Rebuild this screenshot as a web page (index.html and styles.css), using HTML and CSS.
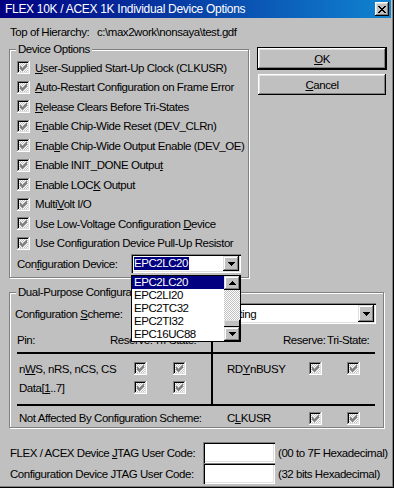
FILE: index.html
```html
<!DOCTYPE html>
<html lang="en">
<head>
    <meta charset="UTF-8">
    <title>FLEX 10K / ACEX 1K Individual Device Options</title>
    <link rel="stylesheet" href="styles.css">
</head>
<body>
    <!-- Shared bitmaps: checked (disabled) checkbox, arrows -->
    <svg class="defs" width="0" height="0" aria-hidden="true">
        <defs>
            <pattern id="dither" width="2" height="2" patternUnits="userSpaceOnUse">
                <rect width="2" height="2" fill="#c0c0c0"/>
                <rect width="1" height="1" fill="#fff"/>
                <rect x="1" y="1" width="1" height="1" fill="#fff"/>
            </pattern>
            <symbol id="chk" viewBox="0 0 13 13" shape-rendering="crispEdges">
                <rect width="12" height="1" fill="#808080"/>
                <rect width="1" height="12" fill="#808080"/>
                <rect x="1" y="1" width="10" height="1" fill="#000"/>
                <rect x="1" y="1" width="1" height="10" fill="#000"/>
                <rect y="12" width="13" height="1" fill="#fff"/>
                <rect x="12" width="1" height="13" fill="#fff"/>
                <rect x="1" y="11" width="11" height="1" fill="#dfdfdf"/>
                <rect x="11" y="1" width="1" height="11" fill="#dfdfdf"/>
                <rect x="2" y="2" width="9" height="9" fill="url(#dither)"/>
                <path fill="#808080" d="M9 3h1v1h-1z M8 4h2v1h-2z M3 5h1v1h-1z M7 5h3v1h-3z M3 6h2v1h-2z M6 6h3v1h-3z M3 7h5v1h-5z M4 8h3v1h-3z M5 9h1v1h-1z"/>
            </symbol>
            <symbol id="arrow-down" viewBox="0 0 7 4" shape-rendering="crispEdges">
                <path fill="#000" d="M0 0h7v1H0z M1 1h5v1H1z M2 2h3v1H2z M3 3h1v1H3z"/>
            </symbol>
            <symbol id="arrow-up" viewBox="0 0 7 4" shape-rendering="crispEdges">
                <path fill="#000" d="M3 0h1v1H3z M2 1h3v1H2z M1 2h5v1H1z M0 3h7v1H0z"/>
            </symbol>
        </defs>
    </svg>

    <div class="dialog">
        <div class="titlebar">
            <span class="title">FLEX 10K / ACEX 1K Individual Device Options</span>
            <span class="close-btn">
                <svg width="8" height="7" viewBox="0 0 8 7" shape-rendering="crispEdges"><path fill="#000" d="M0 0h2v1H0z M6 0h2v1H6z M1 1h2v1H1z M5 1h2v1H5z M2 2h4v1H2z M3 3h2v1H3z M2 4h4v1H2z M1 5h2v1H1z M5 5h2v1H5z M0 6h2v1H0z M6 6h2v1H6z"/></svg>
            </span>
        </div>

        <div class="content">
            <div class="hier">
                <span class="hier-label">Top of Hierarchy:</span>
                <span>c:\max2work\nonsaya\test.gdf</span>
            </div>

            <div class="main">
                <!-- Device Options -->
                <div class="group dev-group">
                    <span class="legend">Device Options</span>
                    <div class="cb-row"><svg class="cb"><use href="#chk"/></svg><span><u>U</u>ser-Supplied Start-Up Clock (CLKUSR)</span></div>
                    <div class="cb-row"><svg class="cb"><use href="#chk"/></svg><span><u>A</u>uto-Restart Configuration on Frame Error</span></div>
                    <div class="cb-row"><svg class="cb"><use href="#chk"/></svg><span><u>R</u>elease Clears Before Tri-States</span></div>
                    <div class="cb-row"><svg class="cb"><use href="#chk"/></svg><span>E<u>n</u>able Chip-Wide Reset (DEV_CLRn)</span></div>
                    <div class="cb-row"><svg class="cb"><use href="#chk"/></svg><span>Ena<u>b</u>le Chip-Wide Output Enable (DEV_OE)</span></div>
                    <div class="cb-row"><svg class="cb"><use href="#chk"/></svg><span>Enable INIT_DONE Outpu<u>t</u></span></div>
                    <div class="cb-row"><svg class="cb"><use href="#chk"/></svg><span>Enable LOC<u>K</u> Output</span></div>
                    <div class="cb-row"><svg class="cb"><use href="#chk"/></svg><span>Multi<u>V</u>olt I/O</span></div>
                    <div class="cb-row"><svg class="cb"><use href="#chk"/></svg><span>Use Low-Voltage Configuration <u>D</u>evice</span></div>
                    <div class="cb-row"><svg class="cb"><use href="#chk"/></svg><span>Use Configuration Device Pull-Up Resistor</span></div>

                    <div class="cfg-row">
                        <span class="cfg-label">Con<u>f</u>iguration Device:</span>
                        <div class="combo-wrap">
                            <div class="combo combo-small">
                                <span class="combo-value"><span class="sel">EPC2LC20</span></span>
                                <span class="drop"><svg width="7" height="4"><use href="#arrow-down"/></svg></span>
                            </div>
                            <!-- open drop-down list -->
                            <div class="droplist">
                                <div class="items">
                                    <div class="item active">EPC2LC20</div>
                                    <div class="item">EPC2LI20</div>
                                    <div class="item">EPC2TC32</div>
                                    <div class="item">EPC2TI32</div>
                                    <div class="item">EPC16UC88</div>
                                </div>
                                <div class="scroll">
                                    <span class="sbtn"><svg width="7" height="4"><use href="#arrow-up"/></svg></span>
                                    <span class="track"></span>
                                    <span class="thumb"></span>
                                    <span class="sbtn"><svg width="7" height="4"><use href="#arrow-down"/></svg></span>
                                </div>
                            </div>
                        </div>
                    </div>
                </div>

                <div class="buttons">
                    <div class="btn btn-default"><u>O</u>K</div>
                    <div class="btn btn-cancel"><u>C</u>ancel</div>
                </div>
            </div>

            <!-- Dual-Purpose Configuration Pins -->
            <div class="group dual-group">
                <span class="legend">Dual-Purpose Configuration Pins</span>
                <div class="scheme-row">
                    <span class="scheme-label">Configuration <u>S</u>cheme:</span>
                    <div class="combo combo-wide">
                        <span class="combo-value">Passive Serial Bit-Blasting</span>
                        <span class="drop"><svg width="7" height="4"><use href="#arrow-down"/></svg></span>
                    </div>
                </div>

                <div class="pins">
                    <div class="pane pane-left">
                        <div class="pin-head">
                            <span class="ph-pin">Pin:</span>
                            <span class="ph-res">Reserve:</span>
                            <span>Tri-State:</span>
                        </div>
                        <div class="rule"></div>
                        <div class="pin-rows">
                            <div class="pin-row"><span>n<u>W</u>S, nRS, nCS, CS</span><svg class="cb"><use href="#chk"/></svg><svg class="cb"><use href="#chk"/></svg></div>
                            <div class="pin-row"><span>Data[<u>1</u>..7]</span><svg class="cb"><use href="#chk"/></svg><svg class="cb"><use href="#chk"/></svg></div>
                        </div>
                        <div class="rule rule-bottom"></div>
                    </div>
                    <div class="vrule"></div>
                    <div class="pane pane-right">
                        <div class="pin-head">
                            <span class="ph-res">Reserve:</span>
                            <span>Tri-State:</span>
                        </div>
                        <div class="rule"></div>
                        <div class="pin-rows">
                            <div class="pin-row"><span>RD<u>Y</u>nBUSY</span><svg class="cb"><use href="#chk"/></svg><svg class="cb"><use href="#chk"/></svg></div>
                        </div>
                        <div class="rule rule-bottom"></div>
                    </div>
                </div>

                <div class="free-row">
                    <span>Not Affected By Configuration Scheme:</span>
                    <span>C<u>L</u>KUSR</span>
                    <svg class="cb"><use href="#chk"/></svg>
                    <svg class="cb"><use href="#chk"/></svg>
                </div>
            </div>

            <!-- JTAG user codes -->
            <div class="jtag">
                <span>FLEX / ACEX Device <u>J</u>TAG User Code:</span>
                <span class="field"></span>
                <span class="hint">(00 to 7F Hexadecimal)</span>
                <span>Configuration Device JTAG User Code:</span>
                <span class="field"></span>
                <span class="hint">(32 bits Hexadecimal)</span>
            </div>
        </div>
    </div>
</body>
</html>
```

FILE: styles.css
```css
/* Windows classic dialog */
body {
    margin: 0;
    background: #c0c0c0;
    font-family: "Liberation Sans", Arial, sans-serif;
    font-size: 11.5px;
    letter-spacing: -0.45px;
    line-height: 14px;
    color: #000;
    white-space: nowrap;
}
u {
    text-decoration: underline;
    text-underline-offset: 1px;
}
.defs {
    position: absolute;
    width: 0;
    height: 0;
}
.dialog {
    width: 394px;
    height: 488px;
    box-sizing: border-box;
    background: #c0c0c0;
    box-shadow: inset -1px -1px #000, inset -2px -2px #808080;
}
.titlebar {
    width: 391px;
    height: 18px;
    box-sizing: border-box;
    padding: 0 2px 0 5px;
    display: flex;
    align-items: center;
    justify-content: space-between;
    background: linear-gradient(to right, #000080, #1084d0);
    color: #fff;
    font-size: 12px;
    letter-spacing: -0.3px;
}
.close-btn {
    width: 14px;
    height: 14px;
    box-sizing: border-box;
    background: #c0c0c0;
    box-shadow: inset -1px -1px #000, inset 1px 1px #fff, inset -2px -2px #808080, inset 2px 2px #dfdfdf;
    display: flex;
    align-items: center;
    justify-content: center;
}
.close-btn svg {
    display: block;
}
.content {
    padding-left: 9px;
}
.hier {
    margin-top: 7px;
    height: 14px;
    padding-left: 1px;
    display: flex;
}
.hier-label {
    width: 87px;
}
.main {
    display: flex;
    gap: 8px;
    margin-top: 8px;
}

/* etched group boxes */
.group {
    position: relative;
    box-sizing: border-box;
    border: 1px solid #808080;
    box-shadow: 1px 1px 0 #fff, inset 1px 1px 0 #fff;
}
.legend {
    position: absolute;
    top: -8px;
    left: 6px;
    padding: 0 2px;
    background: #c0c0c0;
}
.dev-group {
    width: 240px;
    height: 229px;
    margin-top: 2px;
    padding: 8px 0 0 7px;
}
.cb-row {
    height: 19.5px;
    display: flex;
    align-items: center;
    gap: 5px;
}
.cb {
    width: 13px;
    height: 13px;
    display: block;
    flex: none;
}
.cfg-row {
    margin-top: 1px;
    height: 19px;
    display: flex;
    align-items: center;
}
.cfg-label {
    width: 114px;
}

/* combo boxes */
.combo-wrap {
    position: relative;
}
.combo {
    box-sizing: border-box;
    display: flex;
    padding: 2px;
    background: #fff;
    box-shadow: inset 1px 1px #808080, inset 2px 2px #000, inset -1px -1px #fff, inset -2px -2px #dfdfdf;
}
.combo-small {
    width: 110px;
    height: 19px;
}
.combo-wide {
    width: 245px;
    height: 21px;
}
.combo-value {
    flex: 1;
    padding-left: 1px;
    display: flex;
    align-items: center;
    overflow: hidden;
}
.sel {
    background: #000080;
    color: #fff;
    line-height: 13px;
    padding-right: 1px;
}
.drop, .sbtn {
    width: 16px;
    flex: none;
    background: #c0c0c0;
    box-shadow: inset -1px -1px #000, inset 1px 1px #dfdfdf, inset -2px -2px #808080, inset 2px 2px #fff;
    display: flex;
    align-items: center;
    justify-content: center;
}
.drop svg, .sbtn svg {
    display: block;
}
.droplist {
    position: absolute;
    left: 0;
    top: 21px;
    z-index: 5;
    width: 110px;
    height: 67px;
    box-sizing: border-box;
    border: 1px solid #000;
    background: #fff;
    display: flex;
}
.items {
    flex: 1;
}
.item {
    height: 13px;
    line-height: 13px;
    padding-left: 2px;
}
.item.active {
    background: #000080;
    color: #fff;
}
.scroll {
    width: 16px;
    display: flex;
    flex-direction: column;
}
.sbtn {
    height: 14px;
}
.track {
    flex: 1;
    background: repeating-conic-gradient(#fff 0 25%, #c0c0c0 0 50%) 0 0 / 2px 2px;
}
.thumb {
    height: 7px;
    background: #c0c0c0;
    box-shadow: inset -1px -1px #000, inset 1px 1px #dfdfdf;
}

/* buttons */
.buttons {
    width: 130px;
    display: flex;
    flex-direction: column;
}
.btn {
    box-sizing: border-box;
    display: flex;
    align-items: center;
    justify-content: center;
    background: #c0c0c0;
}
.btn-default {
    height: 23px;
    box-shadow: inset 0 0 0 1px #000, inset -2px -2px #000, inset 2px 2px #fff, inset -3px -3px #808080, inset 3px 3px #dfdfdf;
}
.btn-cancel {
    height: 21px;
    margin: 4px 1px 0;
    box-shadow: inset -1px -1px #000, inset 1px 1px #fff, inset -2px -2px #808080, inset 2px 2px #dfdfdf;
}

/* dual purpose pins */
.dual-group {
    width: 375px;
    margin-top: 14px;
    padding: 10px 0 2px 5px;
}
.scheme-row {
    display: flex;
    align-items: center;
}
.scheme-label {
    width: 116px;
}
.pins {
    display: flex;
    margin: 9px 0 0 2px;
}
.pane-left {
    width: 194px;
}
.pane-right {
    width: 162px;
}
.vrule {
    width: 2px;
    height: 67px;
    margin-top: 6px;
    background: #000;
}
.pin-head {
    height: 14px;
    display: flex;
}
.ph-pin {
    width: 93px;
}
.ph-res {
    width: 44px;
}
.pane-right .pin-head {
    padding-left: 70px;
}
.rule {
    height: 2px;
    margin-top: 5px;
    background: #000;
}
.rule-bottom {
    margin-top: 7px;
}
.pin-rows {
    height: 38px;
    padding-top: 5px;
}
.pin-row {
    height: 19px;
    display: grid;
    grid-template-columns: 115px 39px 13px;
    align-items: center;
    padding-left: 2px;
}
.pane-right .pin-row {
    grid-template-columns: 82px 38px 13px;
    padding-left: 14px;
}
.free-row {
    height: 14px;
    margin: 5px 0 0 2px;
    padding-left: 2px;
    display: grid;
    grid-template-columns: 208px 82px 38px 13px;
    align-items: center;
}

/* JTAG codes */
.jtag {
    margin-top: 14px;
    padding-left: 1px;
    display: grid;
    grid-template-columns: 193px 72px auto;
    grid-auto-rows: 21px;
    align-items: center;
}
.field {
    height: 21px;
    box-sizing: border-box;
    background: #fff;
    box-shadow: inset 1px 1px #808080, inset 2px 2px #000, inset -1px -1px #fff, inset -2px -2px #dfdfdf;
}
.hint {
    padding-left: 3px;
}
```
